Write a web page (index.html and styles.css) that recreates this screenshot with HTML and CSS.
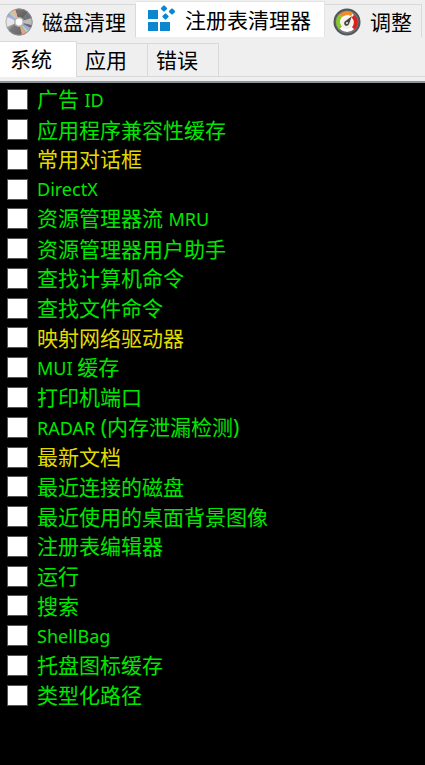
FILE: index.html
```html
<!DOCTYPE html>
<html lang="zh-CN">
<head>
  <meta charset="UTF-8">
  <meta name="viewport" content="width=device-width, initial-scale=1.0">
  <title>注册表清理器</title>
  <link rel="stylesheet" href="styles.css">
</head>

<body>
  <nav class="main-tabs">
    <button class="main-tab">
      <svg class="icon" viewBox="0 0 28 28">
        <defs>
          <linearGradient id="disc" x1="0" y1="0" x2="1" y2="1">
            <stop offset="0" stop-color="#999"/>
            <stop offset="0.3" stop-color="#ccc"/>
            <stop offset="0.5" stop-color="#777"/>
            <stop offset="0.8" stop-color="#666"/>
            <stop offset="1" stop-color="#999"/>
          </linearGradient>
        </defs>
        <circle cx="14" cy="14" r="13.5" fill="url(#disc)"/>
        <path d="M14 14L10 1.2A13.5 13.5 0 0 1 23 3.8z" fill="#555" opacity=".75"/>
        <path d="M14 14L1.5 9A13.5 13.5 0 0 0 1.5 19z" fill="#e6e6e6"/>
        <path d="M14 14L26.5 17A13.5 13.5 0 0 0 26.5 10z" fill="#ddd" opacity=".7"/>
        <path d="M14 14L2 8L4 5z" fill="#a9a4f0"/>
        <path d="M14 14L4 5L6 3z" fill="#9fe0a4"/>
        <path d="M14 14L6 3L10 1z" fill="#eeb49a"/>
        <path d="M14 14L26 20L24 23z" fill="#a9a4f0"/>
        <path d="M14 14L24 23L21 25z" fill="#9fe0a4"/>
        <path d="M14 14L21 25L17 27z" fill="#f0a08c"/>
        <circle cx="14" cy="14" r="13" fill="none" stroke="#999" stroke-opacity=".6"/>
        <circle cx="14" cy="14" r="5" fill="#b5b5b5"/>
        <circle cx="14" cy="14" r="3.4" fill="#fff"/>
      </svg>
      磁盘清理
    </button>
    <button class="main-tab active">
      <svg class="icon" viewBox="0 0 28 28">
        <g fill="#0b86cf">
          <rect x="0" y="4" width="10" height="9"/>
          <rect x="0" y="16" width="10" height="9"/>
          <rect x="12" y="16" width="10" height="9"/>
          <rect x="13.5" y="0" width="5" height="5" rx="1" transform="rotate(45 16 2.5)"/>
          <rect x="21.5" y="3" width="5" height="5" rx="1" transform="rotate(45 24 5.5)"/>
          <rect x="15" y="8" width="5" height="5" rx="1" transform="rotate(45 17.5 10.5)"/>
        </g>
      </svg>
      注册表清理器
    </button>
    <button class="main-tab">
      <svg class="icon" viewBox="0 0 28 28">
        <circle cx="14" cy="14" r="13.5" fill="#50565a"/>
        <circle cx="14" cy="14" r="11.5" fill="#73797c"/>
        <circle cx="14" cy="14" r="10" fill="#fff"/>
        <path d="M7.5 20A8.5 8.5 0 0 1 7.5 8" fill="none" stroke="#8ac926" stroke-width="4"/>
        <path d="M7.5 8A9 9 0 0 1 19 6.5" fill="none" stroke="#f28c28" stroke-width="4"/>
        <path d="M20 8A9 9 0 0 1 20.5 20.5" fill="none" stroke="#dc2020" stroke-width="4"/>
        <circle cx="14" cy="15" r="6" fill="#f6f1e6"/>
        <path d="M19 8L16 16A2.5 2.5 0 1 1 12.5 13z" fill="#444"/>
        <circle cx="14" cy="15" r="1" fill="#eee"/>
      </svg>
      调整
    </button>
  </nav>

  <nav class="sub-tabs">
    <button class="sub-tab active">系统</button>
    <button class="sub-tab">应用</button>
    <button class="sub-tab">错误</button>
  </nav>

  <main class="panel">
    <label class="item"><input type="checkbox"><span>广告 <span class="latin">ID</span></span></label>
    <label class="item"><input type="checkbox"><span>应用程序兼容性缓存</span></label>
    <label class="item warn"><input type="checkbox"><span>常用对话框</span></label>
    <label class="item"><input type="checkbox"><span class="latin">DirectX</span></label>
    <label class="item"><input type="checkbox"><span>资源管理器流 <span class="latin">MRU</span></span></label>
    <label class="item"><input type="checkbox"><span>资源管理器用户助手</span></label>
    <label class="item"><input type="checkbox"><span>查找计算机命令</span></label>
    <label class="item"><input type="checkbox"><span>查找文件命令</span></label>
    <label class="item warn"><input type="checkbox"><span>映射网络驱动器</span></label>
    <label class="item"><input type="checkbox"><span><span class="latin">MUI </span>缓存</span></label>
    <label class="item"><input type="checkbox"><span>打印机端口</span></label>
    <label class="item"><input type="checkbox"><span><span class="latin">RADAR</span> (内存泄漏检测)</span></label>
    <label class="item warn"><input type="checkbox"><span>最新文档</span></label>
    <label class="item"><input type="checkbox"><span>最近连接的磁盘</span></label>
    <label class="item"><input type="checkbox"><span>最近使用的桌面背景图像</span></label>
    <label class="item"><input type="checkbox"><span>注册表编辑器</span></label>
    <label class="item"><input type="checkbox"><span>运行</span></label>
    <label class="item"><input type="checkbox"><span>搜索</span></label>
    <label class="item"><input type="checkbox"><span class="latin">ShellBag</span></label>
    <label class="item"><input type="checkbox"><span>托盘图标缓存</span></label>
    <label class="item"><input type="checkbox"><span>类型化路径</span></label>
  </main>
</body>
</html>
```
FILE: styles.css
```css
* {
  box-sizing: border-box;
}

body {
  margin: 0;
  min-height: 100vh;
  display: flex;
  flex-direction: column;
  background-color: #efefef;
  color: #000;
  font-family: "Noto Sans", "Noto Sans CJK SC", sans-serif;
  font-size: 21px;
  line-height: 24px;
}

button {
  margin: 0;
  border: 1px solid #d9d9d9;
  background-color: #efefef;
  color: inherit;
  font: inherit;
  white-space: nowrap;
  cursor: pointer;
}

.main-tabs {
  display: flex;
  align-items: flex-end;
  height: 37px;
  overflow: hidden;
}

.main-tab {
  display: flex;
  flex-shrink: 0;
  align-items: center;
  gap: 9px;
  height: 33px;
  padding: 2px 9px 0 8px;
  border-width: 1px 1px 0 0;
}

.main-tab:first-child {
  padding-left: 5px;
}

.main-tab.active {
  height: 36px;
  padding: 0 13px 0 12px;
  border-color: #e4e4e4;
  background-color: #fff;
}

.icon {
  width: 28px;
  height: 28px;
  overflow: visible;
}

.sub-tabs {
  display: flex;
  align-items: flex-end;
  height: 40px;
  border-bottom: 1px solid #d9d9d9;
}

.sub-tab {
  height: 33px;
  padding: 0 17px 0 10px;
  border-width: 1px 1px 0 0;
}

.sub-tab:first-child {
  padding-right: 24px;
}

.sub-tab:not(.active) {
  padding-left: 8px;
  padding-right: 20px;
}

.sub-tab.active {
  height: 36px;
  margin-bottom: -1px;
  padding-bottom: 2px;
  background-color: #fff;
}

.panel {
  flex: 1;
  display: grid;
  grid-auto-rows: 1fr;
  margin-top: 4px;
  padding: 2px 7px 55px;
  border-top: 2px solid #8a929b;
  background-color: #000;
}

.item {
  display: flex;
  align-items: center;
  gap: 9px;
  color: #00e800;
  white-space: nowrap;
}

.item.warn {
  color: #e0dc00;
}

.item input {
  appearance: none;
  width: 21px;
  height: 21px;
  margin: 0;
  border: 1px solid #555;
  background-color: #fff;
}

.item input:checked {
  background-color: #00a800;
}

.latin {
  font-size: 18px;
}
```
